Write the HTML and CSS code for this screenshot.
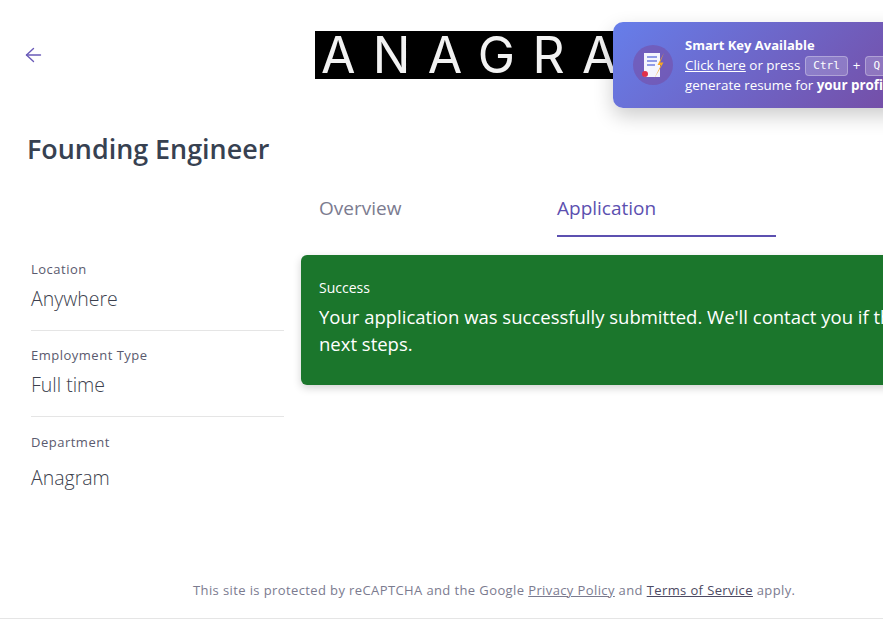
FILE: index.html
```html
<!DOCTYPE html>
<html lang="en">
<head>
<meta charset="utf-8">
<title>Founding Engineer</title>
<link rel="stylesheet" href="styles.css">
</head>
<body>
<div class="page">
  <header class="topbar">
    <a class="back" href="#" aria-label="Back">
      <svg width="18" height="16" viewBox="0 0 18 16" fill="none" stroke="#6a5bb8" stroke-width="1.4" stroke-linecap="round" stroke-linejoin="round"><path d="M15.500 8H1.500"/><path d="M8.500 1.500 1.500 8 8.500 14.500"/></svg>
    </a>
    <div class="logo">ANAGRAM</div>
  </header>
  <h1 class="title">Founding Engineer</h1>
  <div class="columns">
    <aside class="side">
      <div class="fact">
        <div class="fact-label">Location</div>
        <div class="fact-value">Anywhere</div>
      </div>
      <div class="fact">
        <div class="fact-label">Employment Type</div>
        <div class="fact-value">Full time</div>
      </div>
      <div class="fact fact-last">
        <div class="fact-label">Department</div>
        <div class="fact-value">Anagram</div>
      </div>
    </aside>
    <main class="content">
      <nav class="tabs">
        <a class="tab" href="#">Overview</a>
        <a class="tab tab-active" href="#">Application</a>
      </nav>
      <div class="alert">
        <div class="alert-title">Success</div>
        <div class="alert-body">Your application was successfully submitted. We'll contact you if there are next steps.</div>
      </div>
    </main>
  </div>
  <footer class="foot">
    <p class="foot-text">This site is protected by reCAPTCHA and the Google <a class="foot-link" href="#">Privacy Policy</a> and <a class="foot-link foot-link-dark" href="#">Terms of Service</a> apply.</p>
  </footer>
  <div class="toast">
    <div class="toast-icon">
      <svg width="30" height="32" viewBox="0 0 30 32">
        <rect x="6" y="4" width="16" height="24" fill="#f4f5fd"/>
        <path d="M9 8h10M9 12h10M9 16h8" stroke="#6f7ee0" stroke-width="1.6"/>
        <circle cx="7" cy="25" r="3" fill="#e0304a"/>
        <path d="M26 4 19.500 16h3.500L16 30l9.500-16.500H22z" fill="#f5a623"/>
      </svg>
    </div>
    <div class="toast-text">
      <div class="toast-title">Smart Key Available</div>
      <div class="toast-line"><a class="toast-link" href="#">Click here</a> or press <kbd class="key">Ctrl</kbd> + <kbd class="key">Q</kbd> to</div>
      <div class="toast-line">generate resume for <b class="toast-strong">your profile</b></div>
    </div>
  </div>
</div>
</body>
</html>
```
FILE: styles.css
```css
* { box-sizing: border-box; }
html, body { margin: 0; padding: 0; height: 100%; overflow: hidden; background: #fff; }
.page {
  position: relative;
  width: 883px;
  height: 629px;
  overflow: hidden;
  font-family: "Open Sans", sans-serif;
  color: #3c3f4d;
}
.topbar {
  display: flex;
  align-items: center;
  height: 48px;
  margin-top: 31px;
  padding-left: 25px;
}
.back { display: flex; width: 18px; height: 16px; margin-top: -1px; }
.logo {
  flex: none;
  width: 360px;
  height: 48px;
  margin-left: 272px;
  background: #000;
  color: #f2f2f2;
  font-family: "Inter", sans-serif;
  font-size: 50px;
  font-weight: 400;
  line-height: 48px;
  letter-spacing: 17.300px;
  padding-left: 6px;
  white-space: nowrap;
}
.title {
  margin: 53px 0 0 27px;
  font-size: 26.900px;
  line-height: 34px;
  font-weight: 600;
  color: #374151;
}
.columns {
  display: flex;
  margin-top: 24px;
  padding-left: 31px;
}
.side { flex: none; width: 253px; padding-top: 55px; }
.fact { height: 86px; border-bottom: 1px solid #e5e5e5; padding-top: 15px; }
.fact-last { border-bottom: 0; padding-top: 16px; }
.fact-label { font-size: 13px; line-height: 18px; letter-spacing: 0.5px; color: #5a5a6e; }
.fact-value { margin-top: 9px; font-size: 19.500px; line-height: 24px; font-weight: 300; color: #3c3f4d; }
.fact-last .fact-value { margin-top: 15px; }
.content { flex: none; width: 680px; margin-left: 17px; }
.tabs { display: flex; gap: 19px; padding-left: 18px; height: 47px; }
.tab {
  width: 219px;
  height: 47px;
  font-size: 19px;
  line-height: 30px;
  padding-top: 3px;
  color: #7b7b8f;
  text-decoration: none;
}
.tab-active { color: #5c50b0; border-bottom: 2px solid #5c50b0; }
.alert {
  margin-top: 18px;
  height: 130px;
  padding: 24px 18px 0;
  background: #1b762c;
  border-radius: 6px;
  box-shadow: 0 3px 8px rgba(0,0,0,0.18);
  color: #fff;
}
.alert-title { font-size: 14px; line-height: 18px; }
.alert-body { margin-top: 6px; font-size: 18.500px; line-height: 27px; }
.foot {
  position: absolute;
  left: 0;
  right: 0;
  top: 578px;
  height: 41px;
  border-bottom: 1px solid #e5e5e5;
}
.foot-text {
  margin: 0;
  padding-left: 193px;
  font-size: 13px;
  line-height: 24px;
  color: #7b7b8f;
  letter-spacing: 0.39px;
  white-space: nowrap;
}
.foot-link { color: #7b7b8f; }
.foot-link-dark { color: #4d4a63; }
.toast {
  position: absolute;
  left: 613px;
  top: 22px;
  width: 400px;
  height: 86px;
  display: flex;
  align-items: center;
  border-radius: 10px;
  background: linear-gradient(135deg, #667eea 0%, #764ba2 80%);
  box-shadow: 0 8px 20px rgba(0,0,0,0.2);
  color: #fff;
}
.toast-icon {
  flex: none;
  width: 40px;
  height: 40px;
  margin-left: 20px;
  border-radius: 50%;
  background: rgba(118,75,162,0.55);
  display: flex;
  align-items: center;
  justify-content: center;
}
.toast-text { margin-left: 12px; font-size: 13.400px; line-height: 20px; white-space: nowrap; }
.toast-title { font-size: 13px; font-weight: 700; height: 20px; }
.toast-line { height: 20px; }
.toast-link { color: #fff; }
.toast-strong { font-weight: 700; }
.key {
  display: inline-block;
  vertical-align: middle;
  padding: 0 7px;
  height: 20px;
  line-height: 18px;
  font-family: "DejaVu Sans Mono", monospace;
  font-size: 11px;
  background: rgba(255,255,255,0.2);
  border: 1px solid rgba(255,255,255,0.3);
  border-radius: 4px;
  margin: 0 1.500px;
}
```
